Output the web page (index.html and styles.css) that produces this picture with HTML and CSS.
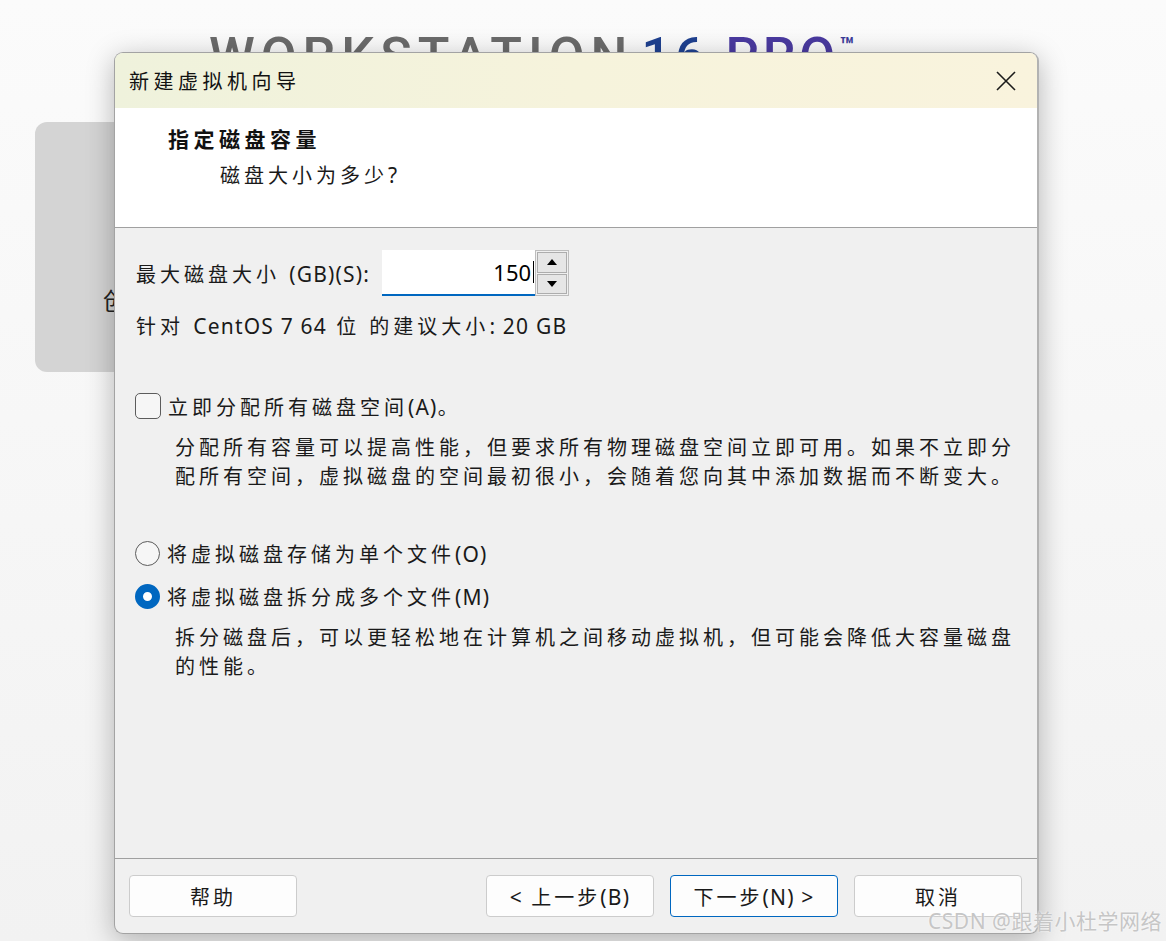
FILE: index.html
```html
<!DOCTYPE html>
<html lang="zh-CN">
<head>
    <meta charset="UTF-8">
    <meta name="viewport" content="width=device-width, initial-scale=1.0">
    <title>新建虚拟机向导</title>
    <link rel="stylesheet" href="styles.css">
</head>
<body>
    <div class="desktop">
        <!-- App window behind the wizard -->
        <div class="brand">WORKSTATION<span class="brand-ver">16 <span class="brand-pro">PRO</span></span><span class="tm">™</span></div>
        <div class="tile">创</div>

        <div class="dialog">
            <div class="titlebar">
                <span class="title">新建虚拟机向导</span>
                <button class="close" aria-label="关闭">
                    <svg width="20" height="20" viewBox="0 0 20 20">
                        <path d="M1 1L19 19M19 1L1 19" stroke="#1b1b1b" stroke-width="1.6" fill="none"/>
                    </svg>
                </button>
            </div>

            <div class="header">
                <div class="heading">指定磁盘容量</div>
                <div class="subheading">磁盘大小为多少<span class="en">?</span></div>
            </div>

            <div class="body">
                <div class="size-row">
                    <label for="diskSize">最大磁盘大小 <span class="en">(GB)(S):</span></label>
                    <div class="spin">
                        <div class="spin-input" id="diskSize">150<i class="caret"></i></div>
                        <div class="spin-btns">
                            <span class="spin-btn"><i class="arrow-up"></i></span>
                            <span class="spin-btn"><i class="arrow-down"></i></span>
                        </div>
                    </div>
                </div>
                <div class="hint">针对 <span class="en">CentOS 7 64</span> 位 的建议大小<span class="en">: 20 GB</span></div>

                <div class="option check-opt">
                    <span class="checkbox"></span>
                    <span>立即分配所有磁盘空间<span class="en">(A)</span>。</span>
                </div>
                <p class="desc">分配所有容量可以提高性能，但要求所有物理磁盘空间立即可用。如果不立即分配所有空间，虚拟磁盘的空间最初很小，会随着您向其中添加数据而不断变大。</p>

                <div class="option radio-opt first-radio">
                    <span class="radio"></span>
                    <span>将虚拟磁盘存储为单个文件<span class="en">(O)</span></span>
                </div>
                <div class="option radio-opt">
                    <span class="radio checked"></span>
                    <span>将虚拟磁盘拆分成多个文件<span class="en">(M)</span></span>
                </div>
                <p class="desc">拆分磁盘后，可以更轻松地在计算机之间移动虚拟机，但可能会降低大容量磁盘的性能。</p>
            </div>

            <div class="footer">
                <button class="btn help">帮助</button>
                <button class="btn"><span class="en">&lt;</span> 上一步<span class="en">(B)</span></button>
                <button class="btn primary">下一步<span class="en">(N) &gt;</span></button>
                <button class="btn">取消</button>
            </div>
        </div>

        <div class="watermark">CSDN @跟着小杜学网络</div>
    </div>
</body>
</html>
```

FILE: styles.css
```css
* {
    box-sizing: border-box;
}

body {
    margin: 0;
    padding: 0;
    background-color: #f4f4f4;
    font-family: "Noto Sans", "Noto Sans CJK SC", sans-serif;
    color: #1a1a1a;
}

.desktop {
    position: relative;
    width: 1166px;
    height: 941px;
    overflow: hidden;
    background: linear-gradient(180deg, #fbfbfb 0%, #f2f2f2 100%);
}

/* background app */
.brand {
    position: absolute;
    left: 209px;
    top: 31px;
    font-family: Roboto, "Liberation Sans", sans-serif;
    font-size: 52px;
    font-weight: 500;
    line-height: 1;
    letter-spacing: 6px;
    color: #6b6b6b;
    white-space: nowrap;
}

.brand-ver {
    margin-left: 8px;
    letter-spacing: 4px;
    color: #1f4190;
}

.brand-pro {
    color: #4a3aa0;
}

.tm {
    font-size: 24px;
    font-weight: 700;
    vertical-align: 20px;
    letter-spacing: 0;
    color: #3a3c9a;
}

.tile {
    position: absolute;
    left: 35px;
    top: 122px;
    width: 200px;
    height: 250px;
    border-radius: 12px;
    background-color: #d4d4d4;
    padding: 160px 0 0 68px;
    font-size: 24px;
    color: #222;
}

/* wizard dialog */
.dialog {
    position: absolute;
    left: 114px;
    top: 52px;
    width: 925px;
    height: 882px;
    display: flex;
    flex-direction: column;
    background-color: #f0f0f0;
    border: 1px solid #a3a3a3;
    border-right: 2px solid #b2b2b2;
    border-radius: 9px;
    overflow: hidden;
    box-shadow: 0 6px 28px rgba(0, 0, 0, 0.28);
    font-size: 20px;
    letter-spacing: 4px;
}

.en {
    font-size: 21px;
    letter-spacing: 1.2px;
}

.titlebar {
    height: 55px;
    flex: none;
    display: flex;
    align-items: center;
    justify-content: space-between;
    padding: 0 21px 0 14px;
    background: linear-gradient(90deg, #eff2dc 0%, #f6f3dc 50%, #f9f3dd 100%);
}

.title {
    font-size: 20px;
    letter-spacing: 4.5px;
    color: #111;
}

.close {
    border: none;
    background: none;
    padding: 0;
    width: 20px;
    height: 20px;
    cursor: pointer;
}

.header {
    height: 120px;
    flex: none;
    background-color: #ffffff;
    border-bottom: 1px solid #a0a0a0;
    padding: 16px 0 0 53px;
}

.heading {
    font-size: 21px;
    font-weight: 700;
    letter-spacing: 4.5px;
    line-height: 30px;
    color: #111;
}

.subheading {
    margin: 6px 0 0 52px;
    line-height: 30px;
}

.body {
    flex: 1;
    padding: 22px 0 0 21px;
}

.size-row {
    display: flex;
    align-items: center;
    gap: 12px;
    height: 46px;
}

.spin {
    display: flex;
    height: 46px;
}

.spin-input {
    position: relative;
    width: 153px;
    height: 46px;
    background-color: #ffffff;
    border-bottom: 2px solid #0067c0;
    text-align: right;
    padding-right: 4px;
    font-size: 22px;
    line-height: 44px;
    letter-spacing: 0;
    color: #000;
}

.caret {
    position: absolute;
    right: 1px;
    top: 11px;
    width: 1px;
    height: 22px;
    background-color: #000;
}

.spin-btns {
    width: 34px;
    display: flex;
    flex-direction: column;
    gap: 1px;
    padding: 1px;
    border: 1px solid #bdbdbd;
    background-color: #f0f0f0;
}

.spin-btn {
    flex: 1;
    display: flex;
    align-items: center;
    justify-content: center;
    background-color: #e6e6e6;
    border: 1px solid #adadad;
}

.arrow-up,
.arrow-down {
    width: 0;
    height: 0;
    border-left: 5px solid transparent;
    border-right: 5px solid transparent;
}

.arrow-up {
    border-bottom: 6px solid #000;
}

.arrow-down {
    border-top: 6px solid #000;
}

.hint {
    margin-top: 15px;
    line-height: 30px;
}

.option {
    display: flex;
    align-items: center;
    height: 30px;
    margin-left: -1px;
}

.check-opt {
    margin-top: 49px;
    gap: 7px;
}

.checkbox {
    width: 26px;
    height: 26px;
    border: 1.5px solid #5c5c5c;
    border-radius: 5px;
    background-color: #f6f6f6;
}

.radio-opt {
    gap: 7px;
    margin-top: 13px;
}

.radio-opt.first-radio {
    margin-top: 47px;
}

.radio {
    width: 25px;
    height: 25px;
    border-radius: 50%;
    border: 1.5px solid #5c5c5c;
    background-color: #f6f6f6;
}

.radio.checked {
    border: 8px solid #0067c0;
    background-color: #ffffff;
}

.desc {
    width: 850px;
    margin: 12px 0 0 39px;
    line-height: 29px;
}

.footer {
    flex: none;
    height: 75px;
    display: flex;
    gap: 16px;
    padding: 16px 15px 16px 14px;
    border-top: 1px solid #a0a0a0;
}

.btn {
    width: 168px;
    height: 42px;
    border: 1px solid #cccccc;
    border-radius: 4px;
    background-color: #fdfdfd;
    font-family: inherit;
    font-size: 20px;
    letter-spacing: 3px;
    color: #1a1a1a;
    cursor: pointer;
}

.btn.help {
    margin-right: auto;
}

.btn.primary {
    border-color: #0067c0;
}

.watermark {
    position: absolute;
    right: 4px;
    top: 905px;
    font-size: 21px;
    letter-spacing: 0.5px;
    color: #c6c6c6;
    text-shadow: 0 0 2px #ffffff;
    white-space: nowrap;
}
```
